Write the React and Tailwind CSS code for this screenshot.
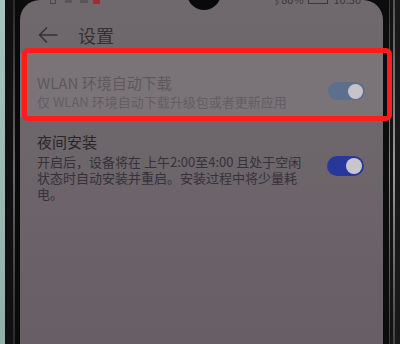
export default function App() {
  const font = { fontFamily: '"Noto Sans CJK SC", "Noto Sans", sans-serif' };
  return (
    <div className="relative w-[400px] h-[344px] overflow-hidden flex bg-[#0d0c0d]" style={font}>
      {/* left edge: desk + bezel */}
      <div className="w-[5px] h-full bg-gradient-to-b from-[#a7c4bd] to-[#8fb1a8]" />
      <div className="w-[15px] h-full flex">
        <div className="w-[8px] h-full bg-[#121112]" />
        <div className="w-[2px] h-full bg-gradient-to-b from-[#2a2a2a] via-[#6a6a6a] to-[#2a2a2a]" />
        <div className="flex-1 h-full bg-[#0b0a0b]" />
      </div>

      {/* screen */}
      <div className="flex-1 h-full flex flex-col rounded-t-[20px] bg-gradient-to-b from-[#6f696d] via-[#6c656a] to-[#685e66]">
        {/* status bar, cut at top */}
        <div className="h-[6px] overflow-hidden">
          <div className="-mt-[7px] h-[13px] flex items-center text-[11px] text-[#3b373a]">
            <div className="ml-[30px] w-[6px] h-[8px] border border-[#4a4649]" />
            <div className="ml-[9px] w-[7px] h-[6px] bg-[#5a5558]" />
            <div className="ml-[8px] w-[8px] h-[6px] bg-[#5c5558]" />
            <div className="ml-[5px] w-[7px] h-[8px] bg-[#9a3038]" />
            <div className="flex-1" />
            <span className="leading-none">ᛒ80%</span>
            <div className="ml-[4px] w-[20px] h-[8px] border border-[#3b373a]" />
            <span className="ml-[6px] mr-[22px] leading-none">10:30</span>
          </div>
        </div>

        {/* header */}
        <div className="mt-[16px] h-[26px] flex items-center pl-[18px]">
          <svg width="20" height="16" viewBox="0 0 20 16" fill="none" stroke="#363236" strokeWidth="1.6" strokeLinecap="round" strokeLinejoin="round">
            <path d="M19 8H1.5M8.5 1L1.5 8l7 7" />
          </svg>
          <span className="ml-[20px] text-[18px] leading-[26px] text-[#343034]">设置</span>
        </div>

        {/* row 1 */}
        <div className="mt-[5px] h-[64px] flex bg-[#7a7478] pl-[17px] pr-[18px]">
          <div className="flex-1 pt-[20px]">
            <div className="text-[15px] leading-[20px] text-[#5e585d]">WLAN 环境自动下载</div>
            <div className="text-[13px] leading-[18px] text-[#645d63]">仅 WLAN 环境自动下载升级包或者更新应用</div>
          </div>
          <div className="mt-[29px] w-[37px] h-[18px] rounded-full bg-[#5b6f8e] flex items-center justify-end pr-[2px] self-start">
            <div className="w-[15px] h-[15px] rounded-full bg-[#c8c3c8]" />
          </div>
        </div>

        {/* row 2 */}
        <div className="flex pl-[17px] pr-[19px]">
          <div className="flex-1 pt-[15px]">
            <div className="text-[15px] leading-[20px] text-[#2a2529]">夜间安装</div>
            <div className="mt-[2px] text-[13px] leading-[16px] text-[#37313a]">
              <div>开启后，设备将在 上午2:00至4:00 且处于空闲</div>
              <div>状态时自动安装并重启。安装过程中将少量耗</div>
              <div>电。</div>
            </div>
          </div>
          <div className="mt-[39px] w-[37px] h-[20px] rounded-full bg-[#28389a] flex items-center justify-end pr-[2px] self-start">
            <div className="w-[16px] h-[16px] rounded-full bg-[#c9c5cc]" />
          </div>
        </div>
        <div className="flex-1" />
      </div>

      {/* right bezel */}
      <div className="w-[17px] h-full flex">
        <div className="w-[6px] h-full bg-[#0e0d0e]" />
        <div className="w-[1px] h-full bg-gradient-to-b from-[#3a3a3a] via-[#8a8a8a] to-[#3a3a3a]" />
        <div className="w-[3px] h-full bg-[#151415]" />
        <div className="w-[2px] h-full bg-gradient-to-b from-[#555] via-[#9a9a9a] to-[#444]" />
        <div className="flex-1 h-full bg-[#1a191a]" />
      </div>

      {/* camera punch-hole */}
      <div className="absolute left-[187px] top-[-24px] w-[34px] h-[34px] rounded-full bg-[#0a090a]" />

      {/* red annotation box */}
      <div className="absolute left-[22px] top-[48px] w-[370px] h-[73px] rounded-[6px] border-[5px] border-[#ff1c1c]" />
    </div>
  );
}
